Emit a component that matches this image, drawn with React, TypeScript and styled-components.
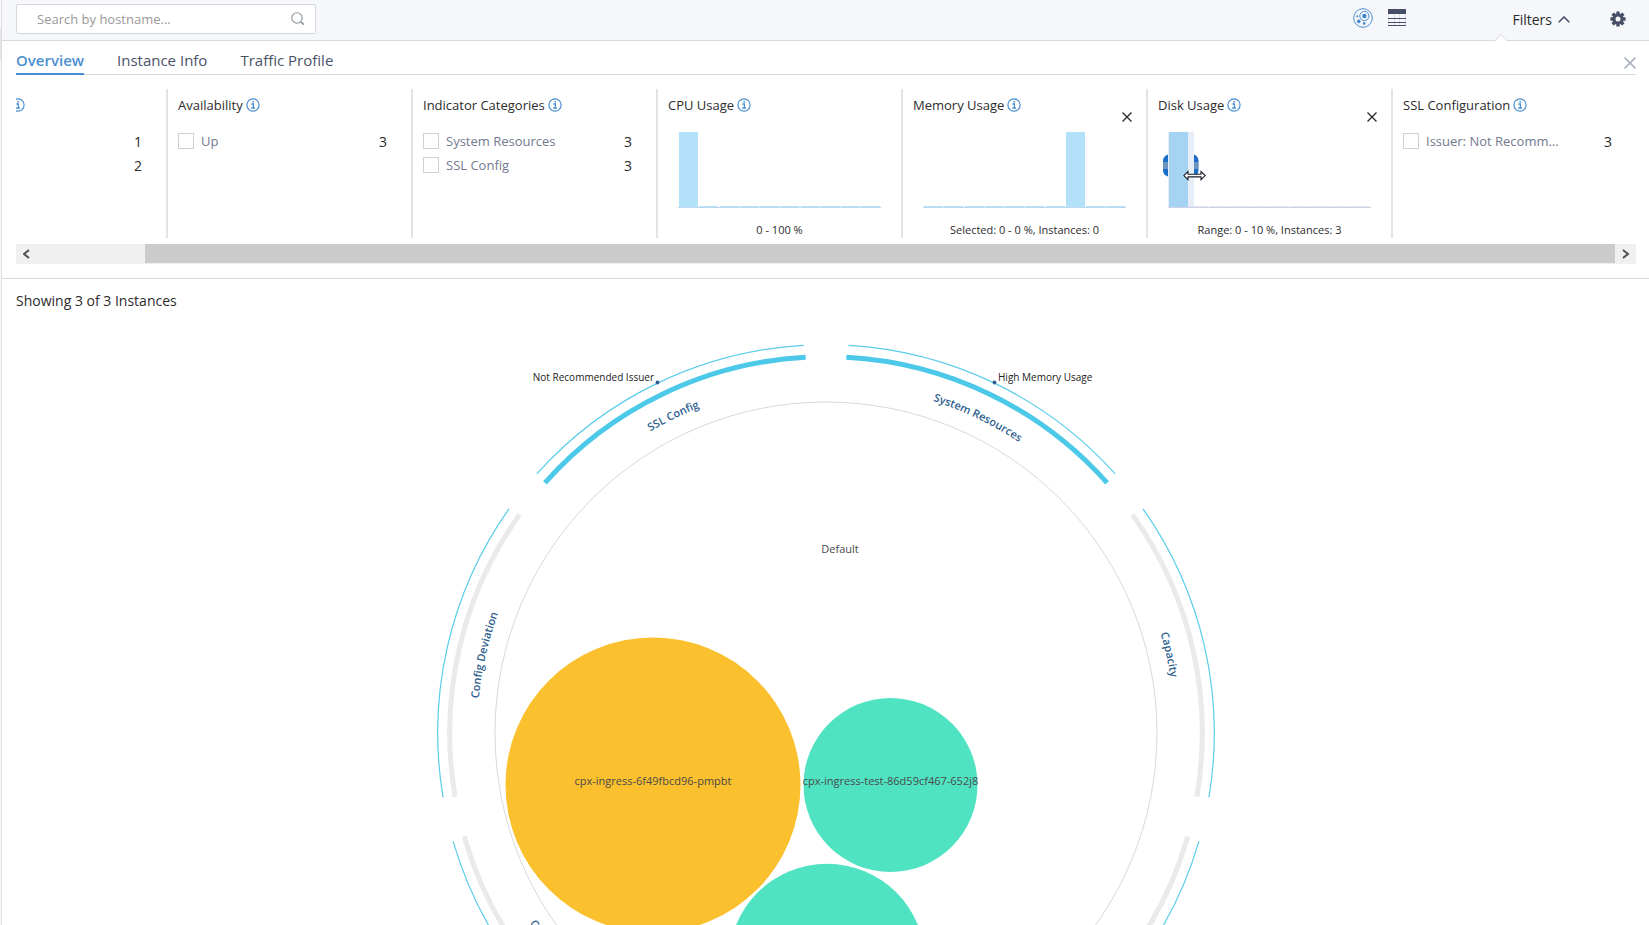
import React from "react";
import styled, { createGlobalStyle, css } from "styled-components";

const GlobalStyle = createGlobalStyle`
  *, *::before, *::after { box-sizing: border-box; }
  body {
    margin: 0;
    background: #fff;
    color: #2c2c2c;
    font-family: "Open Sans", "Noto Sans", sans-serif;
    font-size: 13px;
  }
`;

const Page = styled.div`
  display: flex;
  height: 100vh;
  overflow: hidden;
`;

const Rail = styled.div`
  width: 1px;
  padding-top: 28px;
  background: #fbfbfc;
`;

const RailHandle = styled.div`
  height: 32px;
  background: #e6e6e8;
`;

const Main = styled.main`
  display: flex;
  flex: 1;
  flex-direction: column;
  min-width: 0;
  border-left: 1px solid #dcdde0;
`;

const Toolbar = styled.header`
  display: flex;
  align-items: center;
  justify-content: space-between;
  height: 41px;
  padding: 0 23px 2px 14px;
  background: #f6f7fa;
  border-bottom: 1px solid #d8d9dc;
`;

const SearchBox = styled.label`
  display: flex;
  align-items: center;
  width: 300px;
  height: 30px;
  padding: 0 10px 0 20px;
  background: #fff;
  border: 1px solid #d5d8de;
  border-radius: 2px;
`;

const SearchInput = styled.input`
  flex: 1;
  min-width: 0;
  padding: 0;
  border: 0;
  outline: 0;
  background: none;
  color: #2c2c2c;
  font: inherit;
  &::placeholder { color: #999; opacity: 1; }
`;

const ToolGroup = styled.div`
  display: flex;
  align-items: center;
`;

const ViewGroup = styled.div`
  display: flex;
  gap: 15px;
  margin: 0 106px 2px 0;
`;

const PlainButton = styled.button`
  display: flex;
  align-items: center;
  padding: 0;
  border: 0;
  background: none;
  color: inherit;
  font: inherit;
  cursor: pointer;
`;

const FiltersButton = styled(PlainButton)`
  position: relative;
  gap: 6px;
  margin-right: 40px;
  font-size: 14px;
`;

const Notch = styled.svg`
  position: absolute;
  left: -18px;
  top: 24px;
`;

const FilterPanel = styled.section`
  padding: 0 13px 14px 14px;
  border-bottom: 1px solid #d8d9dc;
`;

const TabBar = styled.nav`
  display: flex;
  align-items: flex-end;
  height: 34px;
  border-bottom: 1px solid #d8d9dc;
`;

const Tab = styled.a<{ $active?: boolean }>`
  height: 34px;
  margin: 0 33px -1px 0;
  line-height: 38px;
  font-size: 15px;
  color: #4a5268;
  text-decoration: none;
  ${({ $active }) =>
    $active &&
    css`
      color: #4a8fd0;
      font-weight: 600;
      border-bottom: 2px solid #4a8fd0;
    `}
`;

const PanelClose = styled(PlainButton)`
  margin: 0 0 5px auto;
  color: #aab2c0;
`;

const Facets = styled.div`
  display: flex;
  justify-content: flex-end;
  height: 149px;
  margin: 14px 0 6px;
  overflow: hidden;
`;

const Facet = styled.section`
  flex: none;
  width: 245px;
  padding: 8px 20px 0 10px;
  border-left: 2px solid #e3e3e3;
`;

const FacetTitle = styled.h2<{ $indent: number }>`
  display: flex;
  align-items: center;
  gap: 3px;
  height: 16px;
  margin: 0;
  padding-left: ${({ $indent }) => $indent}px;
  font-size: 13px;
  font-weight: 400;
  white-space: nowrap;
`;

const OptionList = styled.ul`
  margin: 16px 0 0;
  padding: 0 4px 0 0;
  list-style: none;
`;

const Option = styled.li`
  display: flex;
  align-items: center;
  justify-content: space-between;
  height: 24px;
`;

const OptionLabel = styled.label`
  display: flex;
  align-items: center;
  gap: 7px;
  color: #727a8e;
`;

const Checkbox = styled.input`
  appearance: none;
  width: 16px;
  height: 16px;
  margin: 0;
  background: #fff;
  border: 1px solid #d0d0d0;
`;

const Count = styled.span`
  margin-left: auto;
  font-size: 14px;
`;

const ChartTools = styled.div`
  display: flex;
  align-items: flex-start;
  justify-content: flex-end;
  height: 20px;
  margin: -1px -6px 0 0;
`;

const ChartFigure = styled.figure`
  margin: 0 0 0 10px;
  width: 203px;
`;

const ChartSvg = styled.svg`
  display: block;
  overflow: visible;
`;

const Caption = styled.figcaption`
  margin-top: 14px;
  font-size: 11px;
  line-height: 16px;
  text-align: center;
  white-space: nowrap;
`;

const ScrollTrack = styled.div`
  display: flex;
  height: 20px;
  padding-bottom: 1px;
  background: #f0f0f0;
`;

const ScrollStep = styled(PlainButton)`
  justify-content: center;
  width: 21px;
  flex: none;
  color: #505050;
`;

const ScrollGap = styled.div`
  width: 108px;
`;

const ScrollThumb = styled.div`
  flex: 1;
  background: #ccc;
`;

const Summary = styled.p`
  margin: 0;
  padding: 12px 14px 9px;
  font-size: 14px;
  line-height: 20px;
`;

const Stage = styled.section`
  display: flex;
  flex: 1;
  justify-content: center;
  min-height: 0;
  overflow: hidden;
`;

const Diagram = styled.svg`
  flex: none;
`;

const SearchIcon = () => (
  <svg width="14" height="14" viewBox="0 0 14 14" fill="none" stroke="#8f959e" strokeWidth="1.1">
    <circle cx="6" cy="6" r="5.2" />
    <path d="M9.8 9.8L13 12.6" strokeWidth="1.6" />
  </svg>
);

const BubbleIcon = () => (
  <svg width="20" height="20" viewBox="0 0 20 20" fill="none" stroke="#4a8fd0">
    <circle cx="10" cy="10" r="9.3" />
    <circle cx="11.4" cy="8" r="4.6" />
    <g fill="#3f86cb" stroke="none">
      <circle cx="11.4" cy="8" r="2.2" />
      <circle cx="5.8" cy="13.4" r="1.8" />
      <circle cx="11.2" cy="15.4" r="1.3" />
      <circle cx="4.3" cy="8.2" r="1" />
    </g>
  </svg>
);

const TableIcon = () => (
  <svg width="18" height="18" viewBox="0 0 18 18">
    <path d="M.5 5V17M6.5 5V17M11.5 5V17M17.5 5V17" stroke="#d9dcea" />
    <rect width="18" height="5" fill="#464f67" />
    <path d="M0 9.5H18M0 13.5H18M0 16.5H18" stroke="#464f67" />
  </svg>
);

const GearIcon = () => (
  <svg width="16" height="16" viewBox="-8 -8 16 16">
    <g fill="#464f67">
      {[0, 45, 90, 135].map((a) => (
        <rect key={a} x="-1.7" y="-7.6" width="3.4" height="15.2" rx=".5" transform={`rotate(${a})`} />
      ))}
      <circle r="5.6" />
    </g>
    <circle r="2.5" fill="#f6f7fa" />
  </svg>
);

const InfoIcon = () => (
  <svg width="14" height="14" viewBox="0 0 14 14" fill="none" stroke="#4a8fd0">
    <circle cx="7" cy="7" r="6.1" strokeWidth="1.2" />
    <path d="M5.4 6H7.4V10M5.2 10H9" strokeWidth="1.3" />
    <circle cx="7.2" cy="3.8" r=".9" fill="#4a8fd0" stroke="none" />
  </svg>
);

const Cross = ({ size, width }: { size: number; width: number }) => (
  <svg width={size} height={size} viewBox="0 0 12 12" stroke="currentColor" strokeWidth={width}>
    <path d="M.6 .6L11.4 11.4M11.4 .6L.6 11.4" />
  </svg>
);

const Arrow = ({ d }: { d: string }) => (
  <svg width="8" height="10" viewBox="0 0 8 10" fill="none" stroke="currentColor" strokeWidth="2">
    <path d={d} />
  </svg>
);

type HistogramProps = { full: number; caption: string; clearable?: boolean; brushed?: boolean };

const Histogram = ({ full, caption, clearable, brushed }: HistogramProps) => (
  <>
    <ChartTools>
      {clearable && (
        <PlainButton aria-label="Clear range">
          <Cross size={10} width={1.6} />
        </PlainButton>
      )}
    </ChartTools>
    <ChartFigure>
      <ChartSvg width="203" height="76" viewBox="0 0 203 76">
        {brushed && (
          <g>
            <path d="M1 22.5H0Q-5 24 -5 29V38Q-5 43 0 44.5H1Z" fill="#1c6dc9" />
            <path d="M25 22.5H26Q30.5 24 30.5 29V38Q30.5 43 26 44.5H25Z" fill="#1c6dc9" />
            <rect x="-5" y="30" width="6" height="7" fill="#6d93c2" />
            <rect x="25" y="30" width="5" height="7" fill="#6d93c2" />
            <rect x="0" y="0" width="26" height="75" fill="#e8eef8" />
          </g>
        )}
        <g shapeRendering="crispEdges">
          {Array.from({ length: 10 }, (_, i) => (
            <rect
              key={i}
              x={1 + Math.round(i * 20.25)}
              y={i === full ? 0 : 74}
              width="19"
              height={i === full ? 75 : 1}
              fill={brushed ? (i === full ? "#a4d4f1" : "#e6e6ee") : "#b3e1fa"}
            />
          ))}
          <path d="M0 75.5H203" stroke={brushed ? "#ccd3e8" : "#bcd9f0"} />
        </g>
        {brushed && (
          <path
            d="M15.8 43.6L20 39.6V42.3H33V39.6L37.2 43.6L33 47.6V44.9H20V47.6Z"
            fill="#fff"
            stroke="#1d1d2b"
            strokeWidth="1.1"
          />
        )}
      </ChartSvg>
      <Caption>{caption}</Caption>
    </ChartFigure>
  </>
);

type FacetData = {
  id: string;
  title?: string;
  indent?: number;
  options?: { label?: string; count: number }[];
  chart?: HistogramProps;
};

const facets: FacetData[] = [
  { id: "first", indent: 78, options: [{ count: 1 }, { count: 2 }] },
  { id: "availability", title: "Availability", options: [{ label: "Up", count: 3 }] },
  {
    id: "categories",
    title: "Indicator Categories",
    options: [
      { label: "System Resources", count: 3 },
      { label: "SSL Config", count: 3 },
    ],
  },
  { id: "cpu", title: "CPU Usage", chart: { full: 0, caption: "0 - 100 %" } },
  {
    id: "memory",
    title: "Memory Usage",
    chart: { full: 7, caption: "Selected: 0 - 0 %, Instances: 0", clearable: true },
  },
  {
    id: "disk",
    title: "Disk Usage",
    chart: { full: 0, caption: "Range: 0 - 10 %, Instances: 3", clearable: true, brushed: true },
  },
  { id: "ssl", title: "SSL Configuration", options: [{ label: "Issuer: Not Recomm...", count: 3 }] },
];

const CX = 401;
const CY = 413;
const SEGMENT = 360 / 7;

const point = (r: number, deg: number) => {
  const a = (deg * Math.PI) / 180;
  return `${(CX + r * Math.sin(a)).toFixed(2)} ${(CY - r * Math.cos(a)).toFixed(2)}`;
};

const arc = (r: number, from: number, to: number) =>
  `M${point(r, from)}A${r} ${r} 0 0 ${to > from ? 1 : 0} ${point(r, to)}`;

const segments: { label?: string; active?: boolean; flip?: boolean }[] = [
  { label: "System Resources", active: true },
  { label: "Capacity" },
  {},
  {},
  { label: "C", flip: true },
  { label: "Config Deviation" },
  { label: "SSL Config", active: true },
];

const bubbles = [
  { x: 228, y: 465, r: 147.5, fill: "#fbc02d", label: "cpx-ingress-6f49fbcd96-pmpbt" },
  { x: 465.5, y: 465, r: 87, fill: "#50e3c2", label: "cpx-ingress-test-86d59cf467-652j8" },
  { x: 402, y: 642, r: 98.2, fill: "#50e3c2" },
];

const ArcLabel = styled.text`
  fill: #2f5f8f;
  font-size: 11px;
  font-weight: 600;
`;

const IssueLabel = styled.text`
  fill: #222;
  font-size: 10px;
`;

const NodeLabel = styled.text`
  fill: #4a4a4a;
  font-size: 11px;
  text-anchor: middle;
`;

const InstanceDiagram = () => (
  <Diagram width="801" height="826" viewBox="0 0 801 826" role="img" aria-label="Instances by issue category">
    {segments.map(({ label, active, flip }, i) => {
      const from = i * SEGMENT;
      const to = from + SEGMENT;
      return (
        <g key={i} fill="none">
          <path d={arc(388.3, from + 3.3, to - 3.3)} stroke="#5acdea" strokeWidth="1.2" />
          <path d={arc(376.3, from + 3.1, to - 3.1)} stroke={active ? "#4cc9e8" : "#ebeae9"} strokeWidth="5" />
          {label && (
            <>
              <path id={`arc-${i}`} d={flip ? arc(352, to, from) : arc(349, from, to)} />
              <ArcLabel textAnchor={flip ? "start" : "middle"}>
                <textPath href={`#arc-${i}`} startOffset={flip ? "38.5%" : "50%"}>
                  {label}
                </textPath>
              </ArcLabel>
            </>
          )}
        </g>
      );
    })}
    <circle cx={CX} cy={CY} r="331" fill="none" stroke="#d9d9d9" />
    <circle cx="232.5" cy="62.5" r="1.9" fill="#2f5f8f" />
    <circle cx="569.5" cy="62.5" r="1.9" fill="#2f5f8f" />
    <IssueLabel x="229" y="61" textAnchor="end">Not Recommended Issuer</IssueLabel>
    <IssueLabel x="573" y="61">High Memory Usage</IssueLabel>
    <NodeLabel x="415" y="233">Default</NodeLabel>
    {bubbles.map(({ x, y, r, fill, label }) => (
      <g key={x}>
        <circle cx={x} cy={y} r={r} fill={fill} />
        {label && <NodeLabel x={x} y="465">{label}</NodeLabel>}
      </g>
    ))}
  </Diagram>
);

export default function App() {
  return (
    <Page>
      <GlobalStyle />
      <Rail>
        <RailHandle />
      </Rail>
      <Main>
        <Toolbar>
          <SearchBox>
            <SearchInput type="text" placeholder="Search by hostname..." aria-label="Search by hostname" />
            <SearchIcon />
          </SearchBox>
          <ToolGroup>
            <ViewGroup>
              <PlainButton aria-label="Bubble view">
                <BubbleIcon />
              </PlainButton>
              <PlainButton aria-label="Table view">
                <TableIcon />
              </PlainButton>
            </ViewGroup>
            <FiltersButton aria-expanded="true">
              Filters
              <svg width="12" height="7" viewBox="0 0 12 7" fill="none" stroke="#464f67" strokeWidth="1.6">
                <path d="M.7 6.3L6 1L11.3 6.3" />
              </svg>
              <Notch width="14" height="8" viewBox="0 0 14 8">
                <path d="M0 7.5L7 .7L14 7.5V8H0Z" fill="#fff" />
                <path d="M0 7.5L7 .7L14 7.5" fill="none" stroke="#d8d9dc" />
              </Notch>
            </FiltersButton>
            <PlainButton aria-label="Settings">
              <GearIcon />
            </PlainButton>
          </ToolGroup>
        </Toolbar>
        <FilterPanel>
          <TabBar>
            <Tab href="#overview" $active>Overview</Tab>
            <Tab href="#instance-info">Instance Info</Tab>
            <Tab href="#traffic-profile">Traffic Profile</Tab>
            <PanelClose aria-label="Close filters">
              <Cross size={12} width={1.6} />
            </PanelClose>
          </TabBar>
          <Facets>
            {facets.map(({ id, title, indent = 0, options, chart }) => (
              <Facet key={id}>
                <FacetTitle $indent={indent}>
                  {title}
                  <InfoIcon />
                </FacetTitle>
                {options && (
                  <OptionList>
                    {options.map(({ label, count }, i) => (
                      <Option key={i}>
                        {label && (
                          <OptionLabel>
                            <Checkbox type="checkbox" />
                            {label}
                          </OptionLabel>
                        )}
                        <Count>{count}</Count>
                      </Option>
                    ))}
                  </OptionList>
                )}
                {chart && <Histogram {...chart} />}
              </Facet>
            ))}
          </Facets>
          <ScrollTrack>
            <ScrollStep aria-label="Scroll left">
              <Arrow d="M6 1L1 5L6 9" />
            </ScrollStep>
            <ScrollGap />
            <ScrollThumb />
            <ScrollStep aria-label="Scroll right">
              <Arrow d="M1 1L6 5L1 9" />
            </ScrollStep>
          </ScrollTrack>
        </FilterPanel>
        <Summary>Showing 3 of 3 Instances</Summary>
        <Stage>
          <InstanceDiagram />
        </Stage>
      </Main>
    </Page>
  );
}
